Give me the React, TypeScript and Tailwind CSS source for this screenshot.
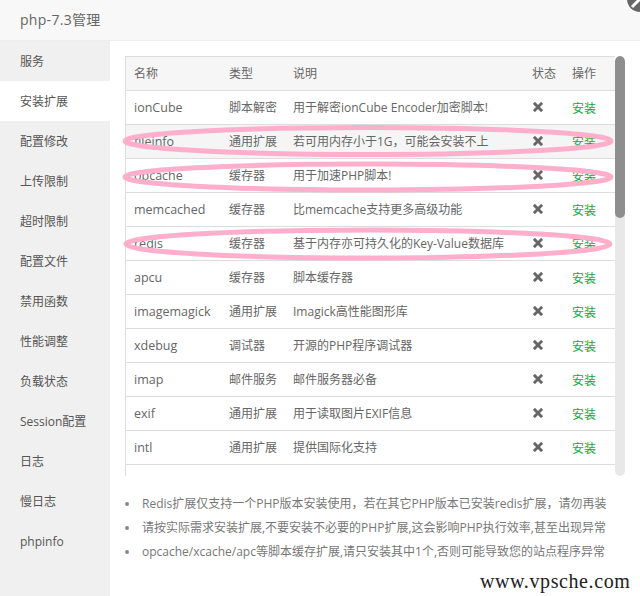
import React from "react";

const font = "[font-family:'Open_Sans','Noto_Sans_CJK_SC',sans-serif]";
const side = ["服务","安装扩展","配置修改","上传限制","超时限制","配置文件","禁用函数","性能调整","负载状态","Session配置","日志","慢日志","phpinfo"];
const rows: [string,string,string][] = [
  ["ionCube","脚本解密","用于解密ionCube Encoder加密脚本!"],
  ["fileinfo","通用扩展","若可用内存小于1G，可能会安装不上"],
  ["opcache","缓存器","用于加速PHP脚本!"],
  ["memcached","缓存器","比memcache支持更多高级功能"],
  ["redis","缓存器","基于内存亦可持久化的Key-Value数据库"],
  ["apcu","缓存器","脚本缓存器"],
  ["imagemagick","通用扩展","Imagick高性能图形库"],
  ["xdebug","调试器","开源的PHP程序调试器"],
  ["imap","邮件服务","邮件服务器必备"],
  ["exif","通用扩展","用于读取图片EXIF信息"],
  ["intl","通用扩展","提供国际化支持"],
];
const notes = [
  "Redis扩展仅支持一个PHP版本安装使用，若在其它PHP版本已安装redis扩展，请勿再装",
  "请按实际需求安装扩展,不要安装不必要的PHP扩展,这会影响PHP执行效率,甚至出现异常",
  "opcache/xcache/apc等脚本缓存扩展,请只安装其中1个,否则可能导致您的站点程序异常",
];

const Cross = () => (
  <svg width="10" height="10" viewBox="0 0 10 10" className="block">
    <path d="M1.5 1.5L8.5 8.5M8.5 1.5L1.5 8.5" stroke="#666" strokeWidth="3.2" strokeLinecap="square" transform="translate(5 5) scale(.9) translate(-5 -5)" />
  </svg>
);

export default function App() {
  return (
    <div className={`${font} relative w-[640px] h-[596px] overflow-hidden bg-white text-[12px] text-[#666]`}>
      <div className="h-[41px] bg-[#f8f8f8] border-b border-[#eee] pl-5 pb-[2px] flex items-center text-[14px] tracking-[0.3px] text-[#666]">php-7.3管理</div>
      <div className="flex h-[555px]">
        <div className="w-[110px] bg-[#f0f0f0] text-[#555]">
          {side.map((s,i)=>(
            <div key={s} className={`h-[40px] flex items-center pl-5 pt-[2px] ${i===1?"bg-white":""}`}>{s}</div>
          ))}
        </div>
        <div className="flex-1 pl-[15px] pt-[15px]">
          <div className="flex h-[420px]">
            <div className="w-[490px] overflow-hidden border-l border-[#ddd]">
              <div className="flex h-[35px] items-center bg-[#f6f6f6] border-y border-[#ddd] pt-[1px]">
                <div className="w-[95px] pl-2">名称</div><div className="w-[64px] pl-2">类型</div><div className="w-[239px] pl-2">说明</div><div className="w-[40px] pl-2">状态</div><div className="pl-2">操作</div>
              </div>
              {rows.map((r,i)=>(
                <div key={r[0]} className={`flex h-[34px] items-center border-b border-[#ddd] ${i===1?"bg-[#f5f5f5]":""}`}>
                  <div className="w-[95px] pl-2 pt-[1px] text-[12.5px]">{r[0]}</div>
                  <div className="w-[64px] pl-2 pt-[1px]">{r[1]}</div>
                  <div className="w-[239px] pl-2 pt-[1px] whitespace-nowrap">{r[2]}</div>
                  <div className="w-[40px] pl-[9px] pb-[1px]"><Cross /></div>
                  <div className="pl-2 pt-[2px] text-[#20a53a]">安装</div>
                </div>
              ))}
            </div>
            <div className="w-[10px] rounded-[5px] bg-[#e8e8e8] overflow-hidden"><div className="h-[162px] bg-[#8e8e8e] rounded-[5px]"></div></div>
          </div>
          <ul className="mt-[16px] text-[#777] leading-[24px]">
            {notes.map(n=>(
              <li key={n} className="flex items-center whitespace-nowrap">
                <span className="w-[4px] h-[4px] rounded-full bg-[#888] mr-[13px] shrink-0"></span>{n}
              </li>
            ))}
          </ul>
        </div>
      </div>
      <svg className="absolute left-0 top-0 pointer-events-none" width="640" height="596" fill="none" stroke="#ffaecb" strokeWidth="5">
        <ellipse cx="368" cy="141" rx="243" ry="13.5"/>
        <ellipse cx="368" cy="177" rx="243" ry="13"/>
        <ellipse cx="368" cy="244" rx="242" ry="14"/>
      </svg>
      <svg className="absolute left-[620px] top-0" width="20" height="16" viewBox="0 0 20 16">
        <circle cx="20" cy="-1" r="14" fill="#fff"/>
        <circle cx="20" cy="-1" r="13" fill="#666"/>
        <path d="M12 7L20 -1" stroke="#fff" strokeWidth="3"/>
      </svg>
      <div className="absolute left-[480px] top-[566px] [font-family:'Liberation_Serif',serif] text-[20px] tracking-[0.6px] text-[#222]">www.vpsche.com</div>
    </div>
  );
}
